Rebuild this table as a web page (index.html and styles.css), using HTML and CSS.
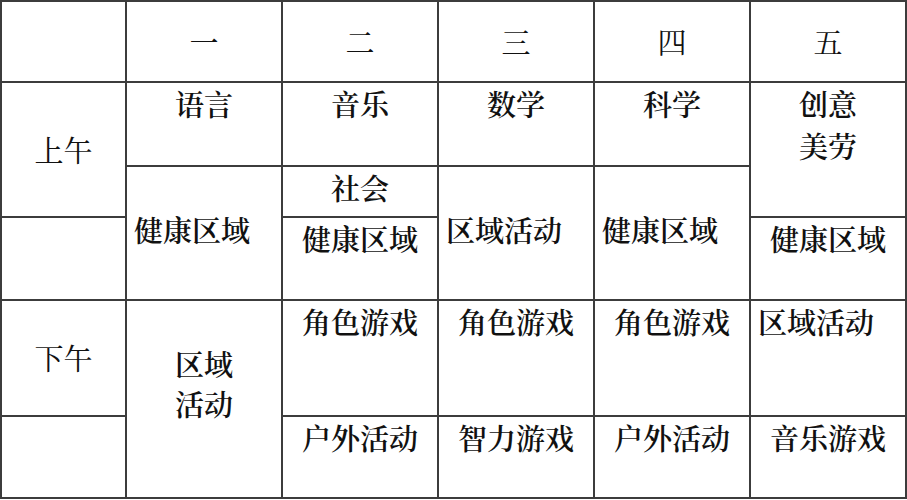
FILE: index.html
```html
<!DOCTYPE html>
<html lang="zh-CN">
<head>
<meta charset="utf-8">
<title>课程表</title>
<link rel="stylesheet" href="styles.css">
</head>
<body>
<div class="timetable">
  <div class="cell x1 y1"></div>
  <div class="cell x2 y1 mid light">一</div>
  <div class="cell x3 y1 mid light">二</div>
  <div class="cell x4 y1 mid light">三</div>
  <div class="cell x5 y1 mid light">四</div>
  <div class="cell x6 y1 mid light">五</div>

  <div class="cell x1 y2 tall mid light">上午</div>
  <div class="cell x1 y4"></div>

  <div class="cell x2 y2 top">语言</div>
  <div class="cell x2 y3 tall left raise">健康区域</div>

  <div class="cell x3 y2 top">音乐</div>
  <div class="cell x3 y3 top">社会</div>
  <div class="cell x3 y4 top">健康区域</div>

  <div class="cell x4 y2 top">数学</div>
  <div class="cell x4 y3 tall left raise">区域活动</div>

  <div class="cell x5 y2 top">科学</div>
  <div class="cell x5 y3 tall left raise">健康区域</div>

  <div class="cell x6 y2 tall top">创意<br>美劳</div>
  <div class="cell x6 y4 top">健康区域</div>

  <div class="cell x1 y5 mid light">下午</div>
  <div class="cell x1 y6"></div>

  <div class="cell x2 y5 tall top stack">区域<br>活动</div>

  <div class="cell x3 y5 top">角色游戏</div>
  <div class="cell x3 y6 top">户外活动</div>

  <div class="cell x4 y5 top">角色游戏</div>
  <div class="cell x4 y6 top">智力游戏</div>

  <div class="cell x5 y5 top">角色游戏</div>
  <div class="cell x5 y6 top">户外活动</div>

  <div class="cell x6 y5 top left">区域活动</div>
  <div class="cell x6 y6 top">音乐游戏</div>
</div>
</body>
</html>
```

FILE: styles.css
```css
html, body {
  margin: 0;
  padding: 0;
  background: #ffffff;
}

.timetable {
  display: grid;
  grid-template-columns: 123px repeat(5, 154px);
  grid-template-rows: 79px 82px 49px 81px 114px 80px;
  gap: 2px;
  padding: 2px;
  width: max-content;
  background: #3c3c3c;
  font-family: "Noto Serif CJK SC", "Noto Sans CJK SC", serif;
  font-size: 29px;
  font-weight: 600;
  line-height: 42px;
  color: #111111;
}

.cell {
  background: #ffffff;
  display: flex;
  justify-content: center;
  text-align: center;
}

.light { font-weight: 400; }

.x1 { grid-column-start: 1; }
.x2 { grid-column-start: 2; }
.x3 { grid-column-start: 3; }
.x4 { grid-column-start: 4; }
.x5 { grid-column-start: 5; }
.x6 { grid-column-start: 6; }

.y1 { grid-row-start: 1; }
.y2 { grid-row-start: 2; }
.y3 { grid-row-start: 3; }
.y4 { grid-row-start: 4; }
.y5 { grid-row-start: 5; }
.y6 { grid-row-start: 6; }

.tall { grid-row-end: span 2; }

.mid { align-items: center; }
.top { align-items: flex-start; }

.left {
  justify-content: flex-start;
  text-align: left;
  padding-left: 7px;
}

.raise {
  align-items: center;
  padding-bottom: 6px;
}

.stack {
  padding-top: 43px;
  line-height: 40px;
}
```
